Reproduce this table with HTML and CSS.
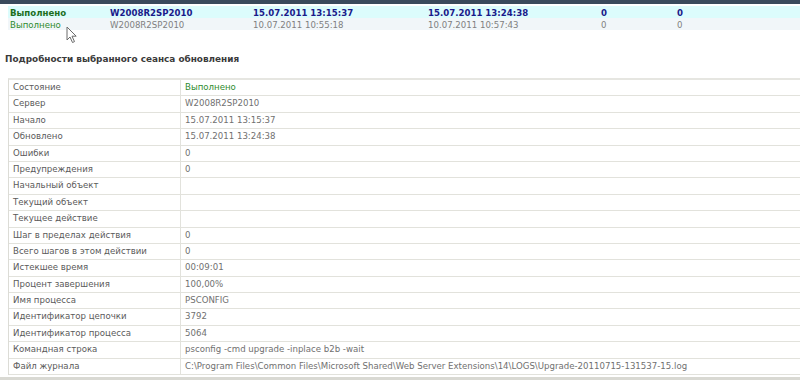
FILE: index.html
```html
<!DOCTYPE html>
<html lang="ru">
<head>
<meta charset="utf-8">
<title>Подробности сеанса обновления</title>
<link rel="stylesheet" href="styles.css">
</head>
<body>
<div class="topbar"></div>
<div class="sessions">
  <div class="srow current">
    <span class="status">Выполнено</span>
    <span>W2008R2SP2010</span>
    <span>15.07.2011 13:15:37</span>
    <span>15.07.2011 13:24:38</span>
    <span>0</span>
    <span>0</span>
  </div>
  <div class="srow past">
    <span class="status">Выполнено</span>
    <span>W2008R2SP2010</span>
    <span>10.07.2011 10:55:18</span>
    <span>10.07.2011 10:57:43</span>
    <span>0</span>
    <span>0</span>
  </div>
  <svg class="cursor" width="12" height="18" viewBox="0 0 12 18"><path d="M1 1 L1 14 L4 11 L6.5 16.5 L8.5 15.6 L6 10.2 L10.2 10.2 Z" fill="#fff" stroke="#6a6a6a" stroke-width="1" stroke-linejoin="round"/></svg>
</div>
<h2 class="title">Подробности выбранного сеанса обновления</h2>
<div class="details">
  <div class="drow"><div class="lbl">Состояние</div><div class="val ok">Выполнено</div></div>
  <div class="drow"><div class="lbl">Сервер</div><div class="val">W2008R2SP2010</div></div>
  <div class="drow"><div class="lbl">Начало</div><div class="val">15.07.2011 13:15:37</div></div>
  <div class="drow"><div class="lbl">Обновлено</div><div class="val">15.07.2011 13:24:38</div></div>
  <div class="drow"><div class="lbl">Ошибки</div><div class="val">0</div></div>
  <div class="drow"><div class="lbl">Предупреждения</div><div class="val">0</div></div>
  <div class="drow"><div class="lbl">Начальный объект</div><div class="val"></div></div>
  <div class="drow"><div class="lbl">Текущий объект</div><div class="val"></div></div>
  <div class="drow"><div class="lbl">Текущее действие</div><div class="val"></div></div>
  <div class="drow"><div class="lbl">Шаг в пределах действия</div><div class="val">0</div></div>
  <div class="drow"><div class="lbl">Всего шагов в этом действии</div><div class="val">0</div></div>
  <div class="drow"><div class="lbl">Истекшее время</div><div class="val">00:09:01</div></div>
  <div class="drow"><div class="lbl">Процент завершения</div><div class="val">100,00%</div></div>
  <div class="drow"><div class="lbl">Имя процесса</div><div class="val">PSCONFIG</div></div>
  <div class="drow"><div class="lbl">Идентификатор цепочки</div><div class="val">3792</div></div>
  <div class="drow"><div class="lbl">Идентификатор процесса</div><div class="val">5064</div></div>
  <div class="drow"><div class="lbl">Командная строка</div><div class="val">psconfig -cmd upgrade -inplace b2b -wait</div></div>
  <div class="drow"><div class="lbl">Файл журнала</div><div class="val">C:\Program Files\Common Files\Microsoft Shared\Web Server Extensions\14\LOGS\Upgrade-20110715-131537-15.log</div></div>
</div>
<div class="footer"></div>
</body>
</html>
```
FILE: styles.css
```css
html, body {
  margin: 0;
  padding: 0;
  background: #fff;
  overflow: hidden;
}
body {
  font-family: "DejaVu Sans", Verdana, sans-serif;
  font-size: 8.6px;
  color: #666;
  width: 800px;
  height: 380px;
}
.topbar {
  height: 4px;
  background: #3a4a5c;
  margin-bottom: 2px;
}
.sessions {
  position: relative;
  margin-left: 8px;
}
.srow {
  display: grid;
  grid-template-columns: 100px 143px 175px 173px 76px 1fr;
  align-items: center;
  padding-left: 2px;
  white-space: nowrap;
}
.srow.current {
  height: 12px;
  padding-top: 1px;
  box-sizing: border-box;
  background: #dcfcfc;
  color: #1a1a8a;
  font-weight: bold;
}
.srow.current .status { color: #1e6e1e; }
.srow.past {
  height: 12px;
  padding-top: 1px;
  box-sizing: border-box;
  background: #f1f6f9;
  color: #808080;
}
.srow.past .status { color: #2e8b2e; }
.cursor {
  position: absolute;
  left: 58px;
  top: 20px;
}
.title {
  margin: 0;
  padding: 23px 0 0 5px;
  height: 48px;
  box-sizing: border-box;
  font-size: 8.9px;
  font-weight: bold;
  color: #3a3a3a;
  line-height: 12px;
}
.details {
  margin-left: 8px;
  border-top: 2px solid #e6e6e1;
  border-left: 1px solid #dcdcd6;
}
.drow {
  display: grid;
  grid-template-columns: 172px 1fr;
  height: 16.4px;
  border-bottom: 1px solid #e2e2dc;
  box-sizing: border-box;
}
.lbl, .val {
  padding-left: 4px;
  line-height: 15px;
  white-space: nowrap;
}
.lbl {
  border-right: 1px solid #e2e2dc;
  color: #5a5a5a;
}
.val { color: #707070; }
.val.ok { color: #2e8b2e; }
.footer {
  margin-top: 2px;
  height: 6px;
  background: #d9d9d3;
}
```
